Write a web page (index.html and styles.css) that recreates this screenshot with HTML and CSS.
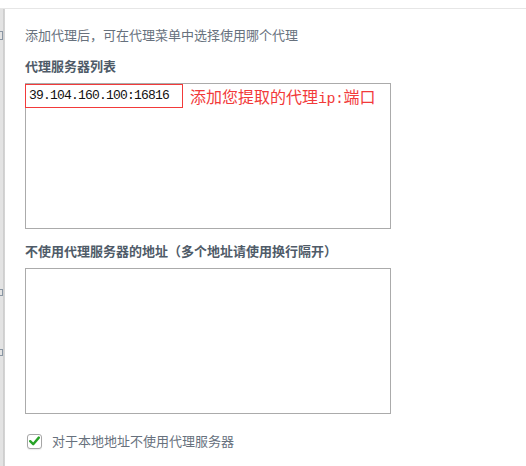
FILE: index.html
```html
<!DOCTYPE html>
<html lang="zh-CN">
<head>
<meta charset="utf-8">
<link rel="stylesheet" href="styles.css">
</head>
<body>
<div class="top"></div>
<div class="frame">
  <div class="side">
    <span class="frag f1"></span>
    <span class="frag f2"></span>
    <span class="frag f3"></span>
  </div>
  <div class="panel">
    <p class="hint">添加代理后，可在代理菜单中选择使用哪个代理</p>
    <h3 class="label">代理服务器列表</h3>
    <div class="box box-first">
      <div class="mark">39.104.160.100:16816</div>
      <div class="note">添加您提取的代理<span class="ascii">ip:</span>端口</div>
    </div>
    <h3 class="label label-second">不使用代理服务器的地址（多个地址请使用换行隔开）</h3>
    <div class="box"></div>
    <label class="check-row">
      <span class="check">
        <svg width="11" height="10" viewBox="0 0 11 10"><path d="M1.2 5.2 L4.2 8.2 L9.8 1.6" fill="none" stroke="#27a327" stroke-width="2.4" stroke-linecap="round" stroke-linejoin="round"/></svg>
      </span>
      <span class="check-text">对于本地地址不使用代理服务器</span>
    </label>
  </div>
</div>
</body>
</html>
```

FILE: styles.css
```css
html, body {
  margin: 0;
  padding: 0;
  background: #ffffff;
}

body {
  width: 526px;
  height: 466px;
  overflow: hidden;
  font-family: "Noto Sans CJK SC", "Noto Sans", sans-serif;
}

.top {
  height: 8px;
  background: #ffffff;
}

.frame {
  display: flex;
  border-top: 1px solid #e6e6e6;
  height: 457px;
}

.side {
  position: relative;
  width: 5px;
  flex: none;
  background: linear-gradient(to right, #e3e3e3 0, #e3e3e3 3px, #cccccc 3px, #d6d6d6 5px);
}

.frag {
  position: absolute;
  left: 0;
  width: 3px;
  height: 7px;
  border-top: 1px solid #8a96a3;
  border-bottom: 1px solid #8a96a3;
  border-right: 1px solid #8a96a3;
  box-sizing: border-box;
}

.f1 { top: 22px; height: 9px; }
.f2 { top: 280px; }
.f3 { top: 340px; }

.panel {
  padding: 16px 0 0 20px;
  flex: 1;
}

.hint {
  margin: 0;
  font-size: 13px;
  line-height: 20px;
  color: #67717d;
  font-weight: 400;
}

.label {
  margin: 11px 0 7px;
  font-size: 13px;
  line-height: 20px;
  color: #4f5b68;
  font-weight: 700;
}

.label-second {
  margin-top: 12px;
}

.box {
  position: relative;
  width: 364px;
  height: 144px;
  border: 1px solid #ababab;
  background: #ffffff;
}

.mark {
  position: absolute;
  left: -1px;
  top: 0;
  width: 156px;
  height: 22px;
  border: 1px solid #f23a3a;
  font-family: "Liberation Mono", "DejaVu Sans Mono", monospace;
  font-size: 13px;
  letter-spacing: -0.8px;
  line-height: 22px;
  padding-left: 3px;
  box-sizing: content-box;
  color: #111111;
}

.mark {
  width: 153px;
}

.note {
  position: absolute;
  left: 164px;
  top: 1px;
  font-size: 16px;
  line-height: 22px;
  color: #f23a3a;
  white-space: nowrap;
}

.ascii {
  font-family: "Liberation Mono", "DejaVu Sans Mono", monospace;
  font-size: 15px;
  letter-spacing: -0.5px;
}

.check-row {
  display: flex;
  align-items: center;
  gap: 10px;
  margin-top: 17px;
  margin-left: 2px;
  height: 20px;
}

.check {
  display: flex;
  align-items: center;
  justify-content: center;
  width: 13px;
  height: 13px;
  border: 1px solid #a6a6a6;
  border-radius: 3px;
  background: #ffffff;
  box-shadow: 0 1px 1px rgba(0, 0, 0, 0.08);
}

.check-text {
  font-size: 13px;
  line-height: 20px;
  color: #67717d;
}
```
